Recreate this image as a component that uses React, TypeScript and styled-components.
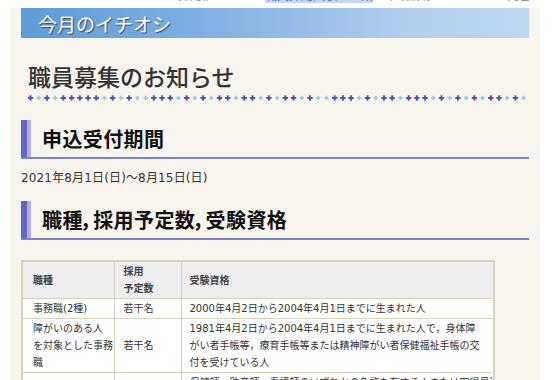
import React from "react";
import styled, { createGlobalStyle } from "styled-components";

const GlobalStyle = createGlobalStyle`
  html, body { margin: 0; padding: 0; background: #ffffff; }
  body {
    font-family: "DejaVu Sans", "Noto Sans CJK JP", sans-serif;
    color: #333333;
  }
`;

const Page = styled.div`
  width: 554px;
  height: 380px;
  overflow: hidden;
  background: #ffffff;
`;

const TopStrip = styled.div`
  height: 8px;
  overflow: hidden;
`;

const TopLine = styled.div`
  display: flex;
  margin-top: -10px;
  font-size: 12px;
  line-height: 13px;
  color: #8a8a8a;
  white-space: nowrap;
`;

const Frag = styled.span<{ $left: number; $w: number; $link?: boolean }>`
  display: inline-block;
  flex-shrink: 0;
  margin-left: ${(p) => p.$left}px;
  width: ${(p) => p.$w}px;
  overflow: hidden;
  color: ${(p) => (p.$link ? "#3a5fd0" : "#8a8a8a")};
  background: ${(p) => (p.$link ? "#c8d6f4" : "transparent")};
`;

const Panel = styled.div`
  margin-left: 10px;
  width: 530px;
  height: 372px;
  box-sizing: border-box;
  padding: 0 11px;
  background: #f8f4ee;
  display: flex;
  flex-direction: column;
`;

const Banner = styled.div`
  width: 508px;
  height: 30px;
  flex-shrink: 0;
  background: linear-gradient(90deg, #5d9bd9 0%, #84b2e3 40%, #b0cdee 75%, #bed7f1 100%);
  display: flex;
  align-items: center;
  padding-left: 17px;
  box-sizing: border-box;
  font-family: "Noto Sans CJK JP", sans-serif;
  font-size: 19px;
  color: #ffffff;
  text-shadow: 1px 1px 1px rgba(40, 40, 60, 0.75);
`;

const PageTitle = styled.h1`
  margin: 23px 0 0 7px;
  font-family: "Noto Sans CJK JP", sans-serif;
  font-size: 23px;
  line-height: 30px;
  font-weight: 500;
  color: #333333;
`;

const DotsWrap = styled.div`
  margin: 4px 0 0 7px;
  height: 6px;
  display: flex;
`;

const SectionHead = styled.h2<{ $top: number }>`
  margin: ${(p) => p.$top}px 0 0 0;
  width: 508px;
  height: 37px;
  flex-shrink: 0;
  display: flex;
  align-items: stretch;
  border-bottom: 2px solid #7b7fd0;
  font-family: "Noto Sans CJK JP", sans-serif;
  font-size: 20px;
  font-weight: 700;
  color: #111111;
  font-feature-settings: "palt";
  letter-spacing: 0.4px;
`;

const Accent = styled.span`
  width: 10px;
  background: linear-gradient(90deg, #6367c2 0 6px, #aeb0e0 6px 10px);
`;

const HeadText = styled.span`
  padding-left: 11px;
  line-height: 37px;
`;

const DateText = styled.p`
  margin: 11px 0 0 0;
  font-size: 12px;
  line-height: 16px;
  letter-spacing: 0.15px;
  color: #333333;
`;

const Table = styled.table`
  margin-top: 20px;
  width: 472px;
  flex-shrink: 0;
  border-collapse: collapse;
  border: 2px solid #d7d2bb;
  background: #ffffff;
  font-size: 10px;
  line-height: 17px;
  color: #333333;
  table-layout: fixed;
`;

const HeadCell = styled.th<{ $w: number; $pl: number }>`
  box-sizing: border-box;
  width: ${(p) => p.$w}px;
  padding: 1px 0 1px ${(p) => p.$pl}px;
  background: #eeeeee;
  border: 1px solid #d7d2bb;
  text-align: left;
  vertical-align: middle;
  font-weight: 700;
  color: #444444;
`;

const Cell = styled.td<{ $pl: number }>`
  box-sizing: border-box;
  padding: 1px 0 1px ${(p) => p.$pl}px;
  border: 1px solid #d7d2bb;
  vertical-align: middle;
  white-space: nowrap;
  overflow: hidden;
`;

const plusPattern = "DLDLDDDDDLDLDLLDDDLDLDLDDLDDLDLDDLDLLDDDLDLDDLDDDLDLDLDLDDLDL";

function Dots() {
  const count = 61;
  const items = [];
  for (let i = 0; i < count; i++) {
    const dark = plusPattern[i % plusPattern.length] === "D";
    const cx = 2.5 + i * 8.22;
    const s = dark ? 2.7 : 2.2;
    const t = dark ? 0.95 : 0.8;
    const fill = dark ? "#4b50b4" : "#86d2db";
    items.push(
      <g key={i} fill={fill}>
        <rect x={cx - s} y={3 - t} width={s * 2} height={t * 2} />
        <rect x={cx - t} y={3 - s} width={t * 2} height={s * 2} />
      </g>
    );
  }
  return (
    <svg width="500" height="6" viewBox="0 0 500 6">
      {items}
    </svg>
  );
}

export default function App() {
  return (
    <Page>
      <GlobalStyle />
      <TopStrip>
        <TopLine>
          <Frag $left={178} $w={32}>採用情報</Frag>
          <Frag $left={44} $w={8}>・</Frag>
          <Frag $left={3} $w={108} $link>職員採用試験のご案内</Frag>
          <Frag $left={12} $w={45}>市政情報</Frag>
          <Frag $left={40} $w={10}>・</Frag>
          <Frag $left={15} $w={35}>お問合せ</Frag>
        </TopLine>
      </TopStrip>
      <Panel>
        <Banner>今月のイチオシ</Banner>
        <PageTitle>職員募集のお知らせ</PageTitle>
        <DotsWrap>
          <Dots />
        </DotsWrap>
        <SectionHead $top={19}>
          <Accent />
          <HeadText>申込受付期間</HeadText>
        </SectionHead>
        <DateText>2021年8月1日(日)～8月15日(日)</DateText>
        <SectionHead $top={15}>
          <Accent />
          <HeadText>職種，採用予定数，受験資格</HeadText>
        </SectionHead>
        <Table>
          <thead>
            <tr>
              <HeadCell $w={92} $pl={10}>職種</HeadCell>
              <HeadCell $w={67} $pl={9}>
                採用
                <br />
                予定数
              </HeadCell>
              <HeadCell $w={313} $pl={8}>受験資格</HeadCell>
            </tr>
          </thead>
          <tbody>
            <tr>
              <Cell $pl={10}>事務職(2種)</Cell>
              <Cell $pl={9}>若干名</Cell>
              <Cell $pl={8}>2000年4月2日から2004年4月1日までに生まれた人</Cell>
            </tr>
            <tr>
              <Cell $pl={10}>
                障がいのある人
                <br />
                を対象とした事務
                <br />
                職
              </Cell>
              <Cell $pl={9}>若干名</Cell>
              <Cell $pl={8}>
                1981年4月2日から2004年4月1日までに生まれた人で，身体障
                <br />
                がい者手帳等，療育手帳等または精神障がい者保健福祉手帳の交
                <br />
                付を受けている人
              </Cell>
            </tr>
            <tr>
              <Cell $pl={10}></Cell>
              <Cell $pl={9}></Cell>
              <Cell $pl={8}>
                保健師，助産師，看護師のいずれかの免許を有する人または取得見込みの人
              </Cell>
            </tr>
          </tbody>
        </Table>
      </Panel>
    </Page>
  );
}
